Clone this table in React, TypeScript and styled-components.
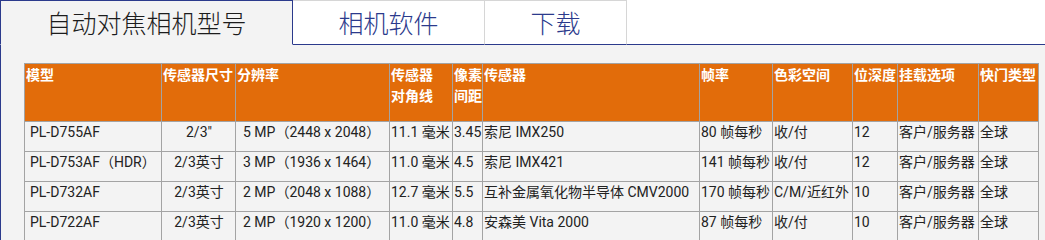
import styled, { createGlobalStyle } from 'styled-components'

const GlobalStyle = createGlobalStyle`
    body {
        margin: 0;
        background: #ffffff;
        font-family: Roboto, "Noto Sans CJK SC", sans-serif;
    }
`

type Cell = { text: string; $center?: boolean; $pad?: number }

const tabs = ['自动对焦相机型号', '相机软件', '下载']

const widths = [137, 74, 154, 63, 30, 217, 73, 80, 45, 81, 60]

const headers: React.ReactNode[] = [
    '模型',
    '传感器尺寸',
    '分辨率',
    <>
        传感器
        <br />
        对角线
    </>,
    '像素间距',
    '传感器',
    '帧率',
    '色彩空间',
    '位深度',
    '挂载选项',
    '快门类型',
]

const rows: string[][] = [
    ['PL-D755AF', '2/3"', '5 MP（2448 x 2048）', '11.1 毫米', '3.45', '索尼 IMX250', '80 帧每秒', '收/付', '12', '客户/服务器', '全球'],
    ['PL-D753AF（HDR）', '2/3英寸', '3 MP（1936 x 1464）', '11.0 毫米', '4.5', '索尼 IMX421', '141 帧每秒', '收/付', '12', '客户/服务器', '全球'],
    ['PL-D732AF', '2/3英寸', '2 MP（2048 x 1088）', '12.7 毫米', '5.5', '互补金属氧化物半导体 CMV2000', '170 帧每秒', 'C/M/近红外', '10', '客户/服务器', '全球'],
    ['PL-D722AF', '2/3英寸', '2 MP（1920 x 1200）', '11.0 毫米', '4.8', '安森美 Vita 2000', '87 帧每秒', '收/付', '10', '客户/服务器', '全球'],
]

const cellFor = (text: string, index: number): Cell => {
    if (index === 0) return { text, $pad: 5 }
    if (index === 1) return { text, $center: true }
    if (index === 2) return { text, $pad: 7 }
    return { text }
}

export default function App() {
    return (
        <>
            <GlobalStyle />
            <Page>
                <TabBar>
                    {tabs.map((tab, index) => (
                        <Tab key={tab} $active={index === 0} $width={[293, 192, 142][index]}>
                            {tab}
                        </Tab>
                    ))}
                    <TabFill />
                </TabBar>
                <Panel>
                    <Table>
                        <colgroup>
                            {widths.map((w, i) => (
                                <col key={i} style={{ width: w }} />
                            ))}
                        </colgroup>
                        <thead>
                            <tr>
                                {headers.map((h, i) => (
                                    <Th key={i}>{h}</Th>
                                ))}
                            </tr>
                        </thead>
                        <tbody>
                            {rows.map((row, r) => (
                                <tr key={r}>
                                    {row.map((value, i) => {
                                        const cell = cellFor(value, i)
                                        return (
                                            <Td key={i} $center={cell.$center} $pad={cell.$pad}>
                                                {cell.text}
                                            </Td>
                                        )
                                    })}
                                </tr>
                            ))}
                        </tbody>
                    </Table>
                </Panel>
            </Page>
        </>
    )
}

const Page = styled.div`
    width: 1045px;
    height: 240px;
    overflow: hidden;
`

const TabBar = styled.div`
    display: flex;
    height: 45px;
`

const Tab = styled.div<{ $active?: boolean; $width: number }>`
    width: ${(p) => p.$width}px;
    box-sizing: border-box;
    display: flex;
    align-items: center;
    justify-content: center;
    padding-bottom: 2px;
    font-family: "Noto Sans CJK SC", sans-serif;
    font-size: 25px;
    font-weight: 300;
    color: ${(p) => (p.$active ? '#1c1c1c' : '#2b3a8c')};
    background: ${(p) => (p.$active ? '#f3f3f3' : '#ffffff')};
    border-top: 1px solid ${(p) => (p.$active ? '#2b3a8c' : '#d6d6d6')};
    border-right: 1px solid ${(p) => (p.$active ? '#2b3a8c' : '#d6d6d6')};
    border-left: ${(p) => (p.$active ? '1px solid #2b3a8c' : 'none')};
    border-bottom: ${(p) => (p.$active ? '1px solid #f3f3f3' : '1px solid #2b3a8c')};
`

const TabFill = styled.div`
    flex: 1;
    border-bottom: 1px solid #2b3a8c;
`

const Panel = styled.div`
    background: #f3f3f3;
    border-left: 1px solid #2b3a8c;
    height: 195px;
    padding: 18px 0 0 23px;
    box-sizing: border-box;
`

const Table = styled.table`
    width: 1014px;
    table-layout: fixed;
    border-collapse: collapse;
    font-size: 14px;
    line-height: 21px;
    color: #222222;
`

const Th = styled.th`
    background: #e26c0a;
    color: #ffffff;
    font-weight: bold;
    text-align: left;
    vertical-align: top;
    padding: 0 0 0 1px;
    height: 57px;
    border: 1px solid #a3a3a3;
    font-family: "Noto Sans CJK SC", Roboto, sans-serif;
`

const Td = styled.td<{ $center?: boolean; $pad?: number }>`
    text-align: ${(p) => (p.$center ? 'center' : 'left')};
    vertical-align: top;
    padding: 0 0 0 ${(p) => p.$pad ?? 1}px;
    height: 29px;
    white-space: nowrap;
    overflow: hidden;
    border: 1px solid #a3a3a3;
`
